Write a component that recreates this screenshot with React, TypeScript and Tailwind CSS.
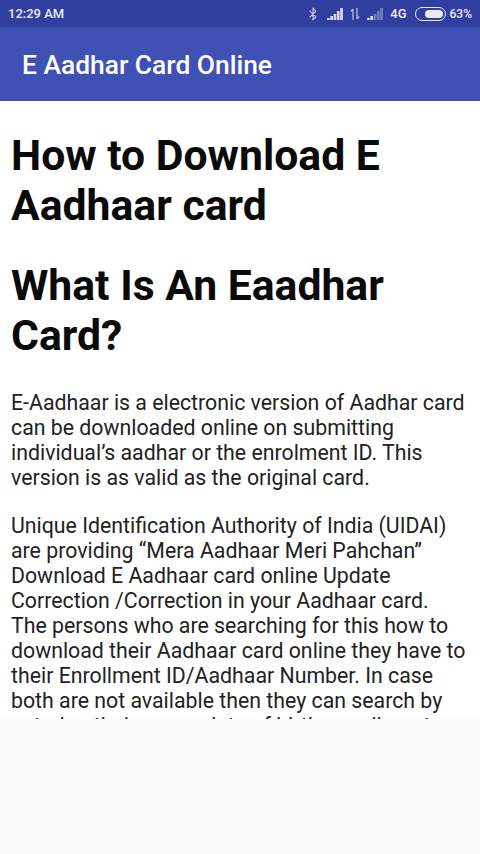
import { Bluetooth } from 'lucide-react'

function SignalBars({ faded }: { faded?: boolean }) {
  const heights = [2, 4, 6, 9, 12]
  return (
    <svg width="16" height="12" viewBox="0 0 16 12" className="block">
      {heights.map((h, i) => (
        <rect
          key={i}
          x={i * 3.3}
          y={12 - h}
          width="2.7"
          height={h}
          fill="#e8eaf6"
          opacity={faded ? (i < 2 ? 0.9 : 0.35) : 0.9}
        />
      ))}
    </svg>
  )
}

function StatusBar() {
  return (
    <div className="flex h-[27px] items-center justify-between bg-[#303f9f] pl-2 pr-2 text-[13px] font-medium text-[#e8eaf6]">
      <span>12:29 AM</span>
      <div className="flex items-center">
        <Bluetooth size={14} strokeWidth={2} className="text-[#c5cae9]" />
        <div className="ml-[7px]">
          <SignalBars />
        </div>
        <svg width="10" height="14" viewBox="0 0 10 14" className="ml-[7px] block">
          <path d="M3 13V2M.8 4.5 3 2M7 1v11M7 12l2.2-2.5" fill="none" stroke="#c5cae9" strokeWidth="1.4" opacity="0.8" />
        </svg>
        <div className="ml-[7px]">
          <SignalBars faded />
        </div>
        <span className="ml-[7px]">4G</span>
        <div className="ml-[8px] flex h-[14px] w-[31px] items-center rounded-full border border-[#e8eaf6] p-[2px]">
          <div className="ml-[7px] h-full flex-1 rounded-full bg-[#e8eaf6]" />
        </div>
        <span className="ml-[4px] text-[12px]">63%</span>
      </div>
    </div>
  )
}

function AppBar() {
  return (
    <header className="flex h-[74px] items-center bg-[#3f51b5] pl-[22px] pt-[3px] text-[26.4px] font-medium text-white shadow-[0_2px_4px_rgba(0,0,0,0.3)]">
      E Aadhar Card Online
    </header>
  )
}

export default function App() {
  return (
    <div className="flex h-[854px] w-[480px] flex-col overflow-hidden bg-[#fafafa] font-['Roboto',sans-serif]">
      <StatusBar />
      <AppBar />
      <main className="h-[618px] overflow-hidden bg-white pl-[11px] pr-[13px] pt-[29px] text-black">
        <h1 className="text-[42.7px] font-bold leading-[50px] text-[#0a0a0a]">How to Download E Aadhaar card</h1>
        <h2 className="mt-[30px] text-[42.7px] font-bold leading-[50px] text-[#0a0a0a]">What Is An Eaadhar Card?</h2>
        <p className="mt-[30px] text-[21.3px] leading-[25px] text-[#222222]">
          E-Aadhaar is a electronic version of Aadhar card can be downloaded online on submitting
          individual’s aadhar or the enrolment ID. This version is as valid as the original card.
        </p>
        <p className="mt-[23px] text-[21.3px] leading-[25px] text-[#222222]">
          Unique Identification Authority of India (UIDAI) are providing “Mera Aadhaar Meri Pahchan”
          Download E Aadhaar card online Update Correction /Correction in your Aadhaar card. The
          persons who are searching for this how to download their Aadhaar card online they have to
          their Enrollment ID/Aadhaar Number. In case both are not available then they can search by
          entering their name, date of birth, enrollment
        </p>
      </main>
    </div>
  )
}
